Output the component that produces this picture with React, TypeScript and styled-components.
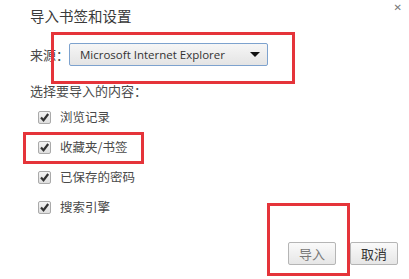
import React from 'react'
import styled, { createGlobalStyle } from 'styled-components';

const GlobalStyle = createGlobalStyle`
  html, body {
    margin: 0;
    padding: 0;
    background: #ffffff;
  }
  body {
    font-family: "Noto Sans CJK SC", "Liberation Sans", sans-serif;
    color: #4a4a4a;
  }
`;

const items = ['浏览记录', '收藏夹/书签', '已保存的密码', '搜索引擎'];

const App = () => {
  return (
    <>
      <GlobalStyle />
      <Dialog>
        <Close>✕</Close>
        <Title>导入书签和设置</Title>
        <SourceRow>
          <Label>来源：</Label>
          <Select>
            <span>Microsoft Internet Explorer</span>
            <Arrow />
          </Select>
        </SourceRow>
        <Section>选择要导入的内容：</Section>
        <List>
          {items.map((item) => (
            <Item key={item}>
              <Check>
                <svg width="11" height="11" viewBox="0 0 11 11">
                  <path d="M2 5.5 L4.5 8.2 L9.2 2" fill="none" stroke="#333" strokeWidth="2.2" />
                </svg>
              </Check>
              {item}
            </Item>
          ))}
        </List>
        <Buttons>
          <Button $muted>导入</Button>
          <Button>取消</Button>
        </Buttons>
        <Mark $x={51} $y={32} $w={244} $h={52} />
        <Mark $x={23} $y={132} $w={121} $h={32} />
        <Mark $x={267} $y={203} $w={83} $h={73} />
      </Dialog>
    </>
  )
}

export default App

const Dialog = styled.div`
  position: relative;
  width: 409px;
  height: 279px;
  box-sizing: border-box;
  padding: 6px 0 0 30px;
  overflow: hidden;
`;

const Close = styled.div`
  position: absolute;
  top: 2px;
  right: 7px;
  font-size: 10px;
  font-weight: bold;
  color: #777;
  font-family: "DejaVu Sans", sans-serif;
`;

const Title = styled.div`
  font-size: 14.5px;
  line-height: 20px;
  color: #3a3a3a;
`;

const SourceRow = styled.div`
  display: flex;
  align-items: center;
  margin-top: 17px;
`;

const Label = styled.div`
  font-size: 13px;
  width: 39px;
`;

const Select = styled.div`
  width: 199px;
  height: 23px;
  box-sizing: border-box;
  border: 1px solid #7da2ce;
  border-radius: 2px;
  background: linear-gradient(#f6f6f6, #e4e4e4);
  display: flex;
  align-items: center;
  justify-content: space-between;
  padding: 0 7px 0 10px;
  font-family: "Open Sans", "Liberation Sans", sans-serif;
  font-size: 11.5px;
  color: #333;
`;

const Arrow = styled.div`
  width: 0;
  height: 0;
  border-left: 5px solid transparent;
  border-right: 5px solid transparent;
  border-top: 5px solid #111;
`;

const Section = styled.div`
  font-size: 13px;
  margin-top: 17px;
  line-height: 16px;
`;

const List = styled.div`
  display: flex;
  flex-direction: column;
  gap: 12px;
  margin-top: 9px;
  padding-left: 8px;
`;

const Item = styled.div`
  display: flex;
  align-items: center;
  gap: 9px;
  font-size: 12.5px;
  line-height: 18px;
`;

const Check = styled.div`
  width: 13px;
  height: 13px;
  box-sizing: border-box;
  border: 1px solid #aaa;
  border-radius: 2px;
  background: linear-gradient(#f4f4f4, #dedede);
  display: flex;
  align-items: center;
  justify-content: center;
`;

const Buttons = styled.div`
  position: absolute;
  left: 288px;
  top: 242px;
  display: flex;
  gap: 14px;
`;

const Button = styled.div<{ $muted?: boolean }>`
  height: 23px;
  box-sizing: border-box;
  padding: 0 10px;
  border: 1px solid #b5b5b5;
  border-radius: 2px;
  background: linear-gradient(#fafafa, #e6e6e6);
  font-size: 13px;
  line-height: 21px;
  color: ${p => (p.$muted ? '#777' : '#333')};
`;

const Mark = styled.div<{ $x: number; $y: number; $w: number; $h: number }>`
  position: absolute;
  left: ${p => p.$x}px;
  top: ${p => p.$y}px;
  width: ${p => p.$w}px;
  height: ${p => p.$h}px;
  box-sizing: border-box;
  border: 3px solid #e5343a;
`;
